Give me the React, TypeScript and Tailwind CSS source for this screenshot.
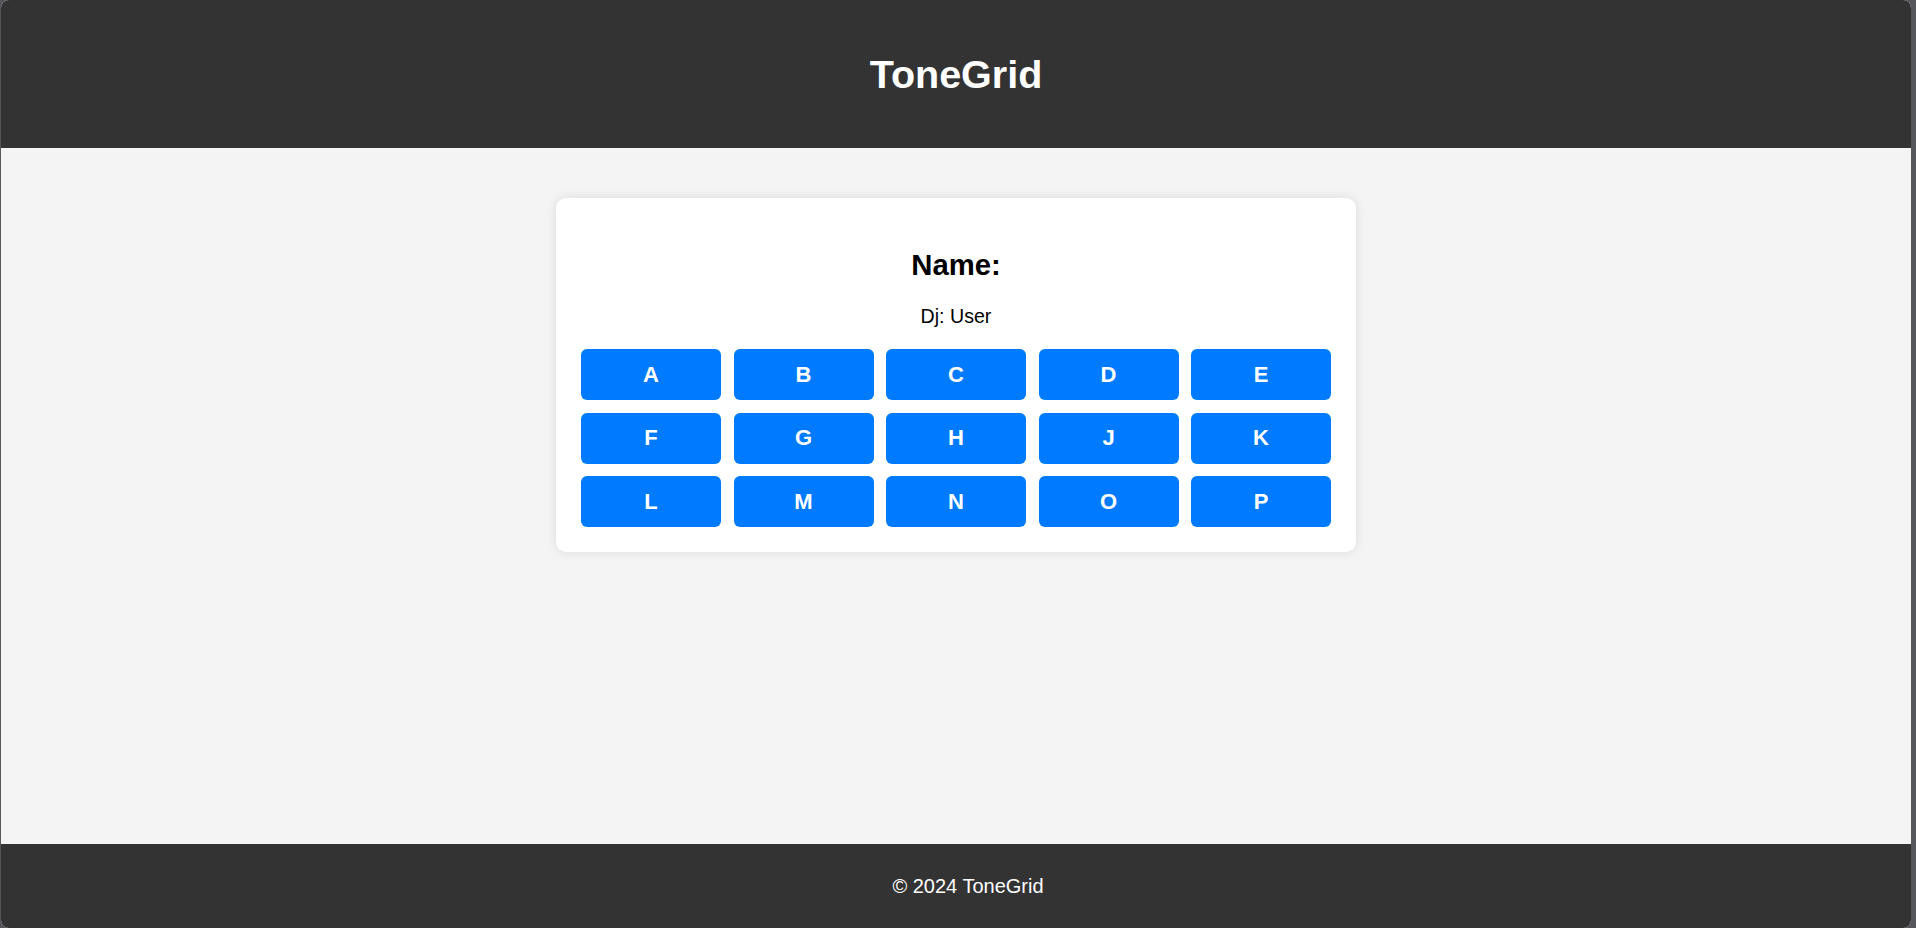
import React from "react";

const keys: string[] = ["A", "B", "C", "D", "E", "F", "G", "H", "J", "K", "L", "M", "N", "O", "P"];

const PadButton: React.FC<{ label: string }> = ({ label }) => {
  return (
    <button className="h-[51px] rounded-[6px] bg-[#007bff] text-[22px] font-bold leading-[26px] text-white cursor-pointer">
      {label}
    </button>
  );
};

const App: React.FC = () => {
  return (
    <div
      className="flex h-screen w-full bg-[#56575c] pl-px pr-[5px]"
      style={{ fontFamily: '"Liberation Sans", Arial, sans-serif' }}
    >
      <div className="flex flex-1 flex-col overflow-hidden rounded-lg bg-[#f4f4f4]">
        <header className="flex h-[148px] shrink-0 items-center justify-center bg-[#333333]">
          <h1 className="text-[39.5px] font-bold leading-[44px] text-white">ToneGrid</h1>
        </header>

        <main className="flex flex-1 justify-center pt-[50px]">
          <div className="h-fit w-[800px] rounded-[10px] bg-white px-[25px] pt-[50px] pb-[25px] shadow-[0_0_12px_rgba(0,0,0,0.1)]">
            <h2 className="text-center text-[29.3px] font-bold leading-[33px] text-black">Name:</h2>
            <p className="mt-[24px] text-center text-[19.6px] leading-[22px] text-black">Dj: User</p>
            <div className="mt-[22px] grid grid-cols-5 gap-[12.5px]">
              {keys.map((k) => (
                <PadButton key={k} label={k} />
              ))}
            </div>
          </div>
        </main>

        <footer className="flex h-[84px] shrink-0 items-center justify-center bg-[#333333] pl-[24px]">
          <p className="text-[20px] leading-[22px] text-white">© 2024 ToneGrid</p>
        </footer>
      </div>
    </div>
  );
};

export default App;
